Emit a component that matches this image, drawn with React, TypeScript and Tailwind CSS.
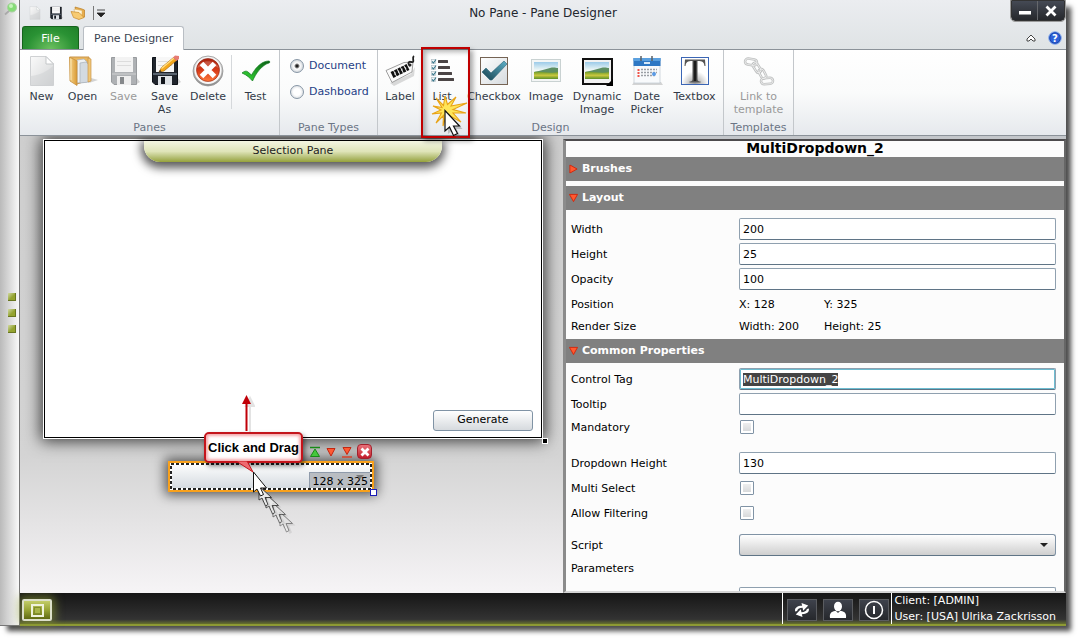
import React, { useEffect, useRef } from 'react';

interface ToolButtonProps {
  label: string;
  width: string;
  disabled?: boolean;
  icon: React.ReactNode;
  children?: React.ReactNode;
}

function ToolButton({ label, width, disabled, icon, children }: ToolButtonProps) {
  return (
    <div className={`relative shrink-0 ${width}`}>
      <button
        type="button"
        disabled={disabled}
        className={`flex w-full flex-col items-center gap-[3px] ${disabled ? 'text-[#9a9a9a]' : 'text-[#333b48]'}`}
      >
        {icon}
        <span className="text-center leading-[13px]">{label}</span>
      </button>
      {children}
    </div>
  );
}

function RibbonGroup({ title, children }: { title: string; children: React.ReactNode }) {
  return (
    <section className="flex shrink-0 flex-col justify-between border-r border-[#c3c7cb] pt-[5px]">
      <div className="flex">{children}</div>
      <h2 className="text-center leading-[14px] text-[#6b7585]">{title}</h2>
    </section>
  );
}

/* ---------- icons ---------- */

function PageIcon({ className }: { className: string }) {
  return (
    <svg viewBox="0 0 32 32" className={className}>
      <defs>
        <linearGradient id="page" x1="0" y1="0" x2="1" y2="1">
          <stop offset="0" stopColor="#fafafa" />
          <stop offset="1" stopColor="#d3d5d6" />
        </linearGradient>
      </defs>
      <path d="M4.500 1.500H20L27.500 9V30.500H4.500Z" fill="url(#page)" stroke="#cfd1d3" />
      <path d="M20 1.500V9H27.500Z" fill="#fff" stroke="#c4c7c9" />
      <path d="M5 21C14 20 22 16 27 11V30H5Z" fill="#c9cbcd" opacity=".4" />
    </svg>
  );
}

function OpenIcon() {
  return (
    <svg viewBox="0 0 32 32" className="h-8 w-8">
      <defs>
        <linearGradient id="folder" x1="0" x2="1">
          <stop offset="0" stopColor="#f7d58c" />
          <stop offset="1" stopColor="#d99a35" />
        </linearGradient>
      </defs>
      <path d="M22 28L31 25L24 23Z" fill="#aaa" opacity=".5" />
      <path d="M3 2H22V25L10 29Z" fill="#e9b65e" stroke="#c9954a" />
      <path d="M10 5L17 4L20 7V27L10 28Z" fill="#eef1f4" stroke="#a7b0ba" strokeWidth=".7" />
      <path d="M13 8L19 7L22 10V27L13 28Z" fill="#d3dae1" stroke="#a7b0ba" strokeWidth=".7" />
      <path d="M21 3L24 4V26L21 27Z" fill="#f0c778" stroke="#c9954a" strokeWidth=".7" />
      <path d="M2.500 2L10 6V30.500L3 26Z" fill="url(#folder)" stroke="#c7913e" strokeWidth=".8" />
      <path d="M4 4V25" stroke="#fff0c6" opacity=".8" />
    </svg>
  );
}

function DiskIcon({ className, faded, pencil }: { className: string; faded?: boolean; pencil?: boolean }) {
  const body = faded ? '#aeb1b4' : '#20252d';
  const edge = faded ? '#989b9e' : '#0d1117';
  return (
    <svg viewBox="0 0 32 32" className={className}>
      <path d="M27 30L32 27L28 22Z" fill="#888" opacity=".35" />
      <path d="M3.500 2.500H28.500V29.500H6L3.500 27Z" fill={body} stroke={edge} />
      <rect x="7" y="2" width="18" height="15" fill={faded ? '#f3f3f3' : '#f7f7f7'} />
      <path d="M9 6.500H23M9 10.500H23" stroke="#dcdcdc" />
      <path d="M4 18H28V20H4Z" fill={faded ? '#bfc1c3' : '#5a6470'} />
      <rect x="9" y="21" width="14" height="9" fill={faded ? '#eeeeee' : '#dfe3e7'} />
      <rect x="12" y="22" width="4" height="7" fill={faded ? '#85888b' : '#11151b'} />
      {pencil && (
        <g>
          <path d="M10 17L12.500 12.500L24.500 2.500L27.500 5.500L15 16Z" fill="#f5a81c" stroke="#a9690c" strokeWidth=".7" />
          <path d="M12.500 13.500L25 3" stroke="#ffe18a" strokeWidth="1.200" />
          <path d="M24 2.500L26 .5L30 1V4L27.500 6Z" fill="#e57b74" />
          <path d="M10 17L11 15L12.500 16.500Z" fill="#222" />
        </g>
      )}
    </svg>
  );
}

function DeleteIcon() {
  return (
    <svg viewBox="0 0 32 32" className="h-8 w-8">
      <defs>
        <linearGradient id="del" x1="0" y1="0" x2="0" y2="1">
          <stop offset="0" stopColor="#a8230f" />
          <stop offset=".5" stopColor="#d63a18" />
          <stop offset="1" stopColor="#ff7a3c" />
        </linearGradient>
        <linearGradient id="ring" x1="0" y1="0" x2="0" y2="1">
          <stop offset="0" stopColor="#e6e6e6" />
          <stop offset="1" stopColor="#8d8d8d" />
        </linearGradient>
      </defs>
      <circle cx="16" cy="16" r="15" fill="url(#ring)" stroke="#8b8b8b" strokeWidth=".7" />
      <circle cx="16" cy="15.500" r="13.500" fill="#f8f8f8" />
      <circle cx="16" cy="15" r="11.500" fill="url(#del)" stroke="#8c2011" strokeWidth=".6" />
      <path d="M9.500 8.500L22.500 21.500M22.500 8.500L9.500 21.500" stroke="#fff" strokeWidth="5" />
      <path d="M5 13C8 4 24 4 27 13C20 10 12 10 5 13Z" fill="#fff" opacity=".2" />
    </svg>
  );
}

function TestIcon() {
  return (
    <svg viewBox="0 0 32 32" className="h-8 w-8">
      <defs>
        <linearGradient id="tick" x1="1" y1="0" x2="0" y2="1">
          <stop offset="0" stopColor="#0b5c16" />
          <stop offset=".5" stopColor="#1f9d24" />
          <stop offset="1" stopColor="#3be23b" />
        </linearGradient>
      </defs>
      <path d="M2 18C5 15.500 7 16 8 17L11.500 20C16 12 22 6 29 6C30 6 30 8 29 8C22 10 16 18 12.500 26C10 23 7 20 2 18Z" fill="url(#tick)" stroke="#0f7a1c" strokeWidth=".7" />
    </svg>
  );
}

function LabelIcon() {
  return (
    <svg viewBox="0 0 32 32" className="h-8 w-8">
      <path d="M6 28L27 19L31 12L30 21L10 31Z" fill="#999" opacity=".35" />
      <path d="M2 15.500L20 7.500L29 7L28 17L8 27.500Z" fill="#fafafa" stroke="#888" strokeWidth=".8" />
      <path d="M8 20L24 12" stroke="#111" strokeWidth="6.500" strokeDasharray="3 .8" />
      <path d="M11 17V20M14.500 15.500L15 18M18 13.500V16M21 12L22 14" stroke="#fff" strokeWidth=".8" />
      <path d="M26 11C23 8 25 6 27 7C32 8 27 3 30 1" fill="none" stroke="#222" strokeWidth="1.800" />
      <circle cx="26" cy="10" r="1.500" fill="#222" />
    </svg>
  );
}

function ListIcon() {
  return (
    <svg viewBox="0 0 32 32" className="h-8 w-8">
      {[10, 12, 14, 16].map((width, i) => {
        const y = 5 + i * 6;
        return (
          <g key={y}>
            <rect x="5.500" y={y - 0.5} width="4" height="4" fill="#eef3f5" stroke="#b5c1c6" strokeWidth=".7" />
            <path d={`M6 ${y + 1.5}L7.500 ${y + 3}L10 ${y - 0.5}`} fill="none" stroke="#39788c" strokeWidth="1.100" />
            <rect x="12" y={y} width={width} height="3" rx=".5" fill="#4b4546" />
          </g>
        );
      })}
    </svg>
  );
}

function CheckboxIcon() {
  return (
    <svg viewBox="0 0 32 32" className="h-8 w-8">
      <defs>
        <linearGradient id="cbx" x1="0" y1="0" x2="1" y2="1">
          <stop offset="0" stopColor="#fff" />
          <stop offset="1" stopColor="#d5dade" />
        </linearGradient>
        <linearGradient id="cbt" x1="1" y1="0" x2="0" y2="1">
          <stop offset="0" stopColor="#5fb0c8" />
          <stop offset="1" stopColor="#16414f" />
        </linearGradient>
      </defs>
      <rect x="2.500" y="2.500" width="27" height="27" fill="url(#cbx)" stroke="#756354" />
      <path d="M4 17L8 13L13 18L26 6L29 9L14 25H12Z" fill="url(#cbt)" stroke="#2b6577" strokeWidth=".6" />
    </svg>
  );
}

function PictureIcon({ dynamic }: { dynamic?: boolean }) {
  return (
    <svg viewBox="0 0 32 32" className="h-8 w-8">
      <defs>
        <linearGradient id="sky" x1="0" y1="0" x2="0" y2="1">
          <stop offset="0" stopColor="#9ccbe9" />
          <stop offset=".5" stopColor="#f3f9f5" />
        </linearGradient>
        <linearGradient id="field" x1="0" y1="0" x2="0" y2="1">
          <stop offset="0" stopColor="#6d9a2c" />
          <stop offset=".5" stopColor="#c9c83e" />
          <stop offset="1" stopColor="#5c8f27" />
        </linearGradient>
      </defs>
      {dynamic ? (
        <rect x="2" y="4" width="29" height="25" fill="#f2f2f2" stroke="#111" strokeWidth="2" />
      ) : (
        <rect x="1.500" y="4.500" width="29" height="22" fill="#f4f6f6" stroke="#c9d2d2" />
      )}
      <rect x="4" y="7" width="24" height="17" fill="url(#sky)" />
      <path d="M4 17C11 16 15 14 20 13C24 12 26 13 28 13V24H4Z" fill="#5e8f62" />
      <path d="M4 17C12 16 20 19 28 17V24H4Z" fill="url(#field)" />
      {dynamic && <path d="M32 24V31H25Z" fill="#000" />}
    </svg>
  );
}

function DateIcon() {
  return (
    <svg viewBox="0 0 32 32" className="h-8 w-8">
      <path d="M3 27H30L32 30H1Z" fill="#999" opacity=".4" />
      <rect x="3" y="4" width="26" height="24" fill="#f8fafc" stroke="#c0c8d0" strokeWidth=".7" />
      <rect x="2.500" y="3" width="27" height="8" fill="#2e78c4" />
      <rect x="2.500" y="3" width="27" height="3" fill="#5aa0df" />
      <rect x="13" y="7" width="6" height="2" fill="#d6e8f7" />
      <path d="M10 1V6M21 1V6" stroke="#5a5f66" strokeWidth="1.500" />
      <path d="M10 14.500H26M10 17.500H26M10 20.500H24" stroke="#9a9fa5" strokeWidth="1.500" strokeDasharray="2 1" />
      <path d="M7.500 14V22" stroke="#f0544a" strokeWidth="2" strokeDasharray="2 1" />
      <circle cx="23" cy="19" r="2" fill="#5b9be6" />
    </svg>
  );
}

function TextboxIcon() {
  return (
    <svg viewBox="0 0 32 32" className="h-8 w-8">
      <defs>
        <radialGradient id="tshade" cx=".5" cy="1" r=".5">
          <stop offset="0" stopColor="#999" />
          <stop offset="1" stopColor="#fff" />
        </radialGradient>
      </defs>
      <rect x="2.500" y="2.500" width="27" height="27" fill="url(#tshade)" stroke="#3b66b5" />
      {/* serif T */}
      <path d="M6 4.500H26L26.500 11H25.500C25 7 23.500 6 18.500 6V24C18.500 26 19.500 26.500 21.500 26.500V27.500H10.500V26.500C12.500 26.500 13.500 26 13.500 24V6C8.500 6 7 7 6.500 11H5.500Z" fill="#555" />
      <path d="M16 6V26" stroke="#1c1c1c" strokeWidth="2.500" />
    </svg>
  );
}

function LinkIcon() {
  return (
    <svg viewBox="0 0 32 32" className="h-8 w-8">
      <g fill="none" stroke="#bfc1c1" strokeWidth="2.500">
        <rect x="2" y="4" width="12" height="6" rx="3" transform="rotate(8 8 7)" />
        <rect x="9" y="10" width="11" height="5" rx="2.500" transform="rotate(58 14 12)" />
        <rect x="14" y="16" width="10" height="5" rx="2.500" transform="rotate(62 19 19)" />
        <rect x="18" y="23" width="12" height="6" rx="3" transform="rotate(-4 24 26)" />
      </g>
      <g fill="none" stroke="#f1f1f1" strokeWidth=".8">
        <rect x="2" y="4" width="12" height="6" rx="3" transform="rotate(8 8 7)" />
        <rect x="9" y="10" width="11" height="5" rx="2.500" transform="rotate(58 14 12)" />
        <rect x="14" y="16" width="10" height="5" rx="2.500" transform="rotate(62 19 19)" />
        <rect x="18" y="23" width="12" height="6" rx="3" transform="rotate(-4 24 26)" />
      </g>
    </svg>
  );
}

function SmallFolderIcon() {
  return (
    <svg viewBox="0 0 16 14" className="h-3.5 w-4">
      <path d="M5 1L12 3L14.500 4V11L8 13Z" fill="#e8ad4c" stroke="#b97c22" strokeWidth=".7" />
      <path d="M4 3L12 4.500V9H5Z" fill="#fff5d8" stroke="#d5a95a" strokeWidth=".5" />
      <path d="M1 5.500L9 6.500L14 11.500L9 13.500L3.500 11.500Z" fill="#f7cb72" stroke="#c98b2d" strokeWidth=".7" />
    </svg>
  );
}

function ClickBurst() {
  return (
    <svg viewBox="0 0 42 46" className="pointer-events-none absolute top-10 left-[9px] z-30 h-[46px] w-[42px]">
      <path
        d="M5 3L12.500 10.500L14 1L16.500 9.500L25 2L20 11L36 8L22 14.500L35 18L22 18L30 27L18.500 20.500L20 32L15 21L12 31L12.500 20.500L5 28L10.500 18L1 19L10 15L2 11L11 12.500Z"
        fill="#ffe558"
        stroke="#e8a317"
        strokeWidth="1.100"
      />
      <path d="M14 16V37L18.500 33L22.500 42L26.500 40L22.500 32H28.500Z" fill="#555" opacity=".3" transform="translate(3 2)" />
      <path d="M14 15.500V36L18.500 32L22.500 40.500L26.500 38.500L22.500 31H28.500Z" fill="#fff" stroke="#111" strokeWidth="1.200" />
    </svg>
  );
}

/* ---------- title bar and ribbon ---------- */

function TitleBar() {
  return (
    <div className="grid h-[26px] grid-cols-[1fr_auto_1fr]">
      <div className="flex items-center gap-[7px] pl-2">
        <button type="button" aria-label="New"><PageIcon className="h-3.5 w-3.5" /></button>
        <button type="button" aria-label="Save"><DiskIcon className="h-3.5 w-3.5" /></button>
        <button type="button" aria-label="Open"><SmallFolderIcon /></button>
        <span className="h-3.5 border-l border-[#777]" />
        <button type="button" aria-label="Customize toolbar" className="-ml-1">
          <svg viewBox="0 0 8 8" className="h-2 w-2"><path d="M0 1H8M0 4H8L4 8Z" fill="#222" stroke="#222" strokeWidth=".8" /></svg>
        </button>
      </div>
      <h1 className="self-center text-xs text-[#23272e]">No Pane - Pane Designer</h1>
      <div className="flex items-start justify-end pr-px">
        <div className="flex h-[21px] overflow-hidden rounded-b border border-[#333] bg-linear-to-b from-[#454a55] to-[#26282c] outline outline-[#9b9b9b]">
          <button type="button" aria-label="Minimize" className="flex w-[26px] items-center justify-center border-r border-[#66686c] pt-1">
            <svg viewBox="0 0 12 4" className="h-1 w-3"><rect width="12" height="3.500" fill="#fff" /></svg>
          </button>
          <button type="button" aria-label="Close" className="flex w-[26px] items-center justify-center">
            <svg viewBox="0 0 12 12" className="h-3 w-3"><path d="M1.500 1.500L10.500 10.500M10.500 1.500L1.500 10.500" stroke="#fff" strokeWidth="2.800" /></svg>
          </button>
        </div>
      </div>
    </div>
  );
}

function TabRow() {
  return (
    <div className="flex h-6 items-end border-b border-[#8b9299] pl-0.5">
      <button
        type="button"
        className="h-[23px] w-[57px] rounded-t-[3px] border border-b-0 border-[#15641c] bg-[radial-gradient(ellipse_at_bottom,#6cc05f,#2a9234_60%,#1f8029)] pt-0.5 text-white"
      >
        File
      </button>
      <button
        type="button"
        className="relative top-px ml-1 h-6 rounded-t-[3px] border border-b-0 border-[#b9bec4] bg-white px-2.5 pt-0.5 text-[#3b4452]"
      >
        Pane Designer
      </button>
      <div className="ml-auto flex items-center gap-3 self-center pr-1">
        <button type="button" aria-label="Collapse ribbon">
          <svg viewBox="0 0 10 8" className="h-2 w-2.5">
            <path d="M1 5L5 1L9 5V7H7L5 5L3 7H1Z" fill="#fff" stroke="#444" />
          </svg>
        </button>
        <button type="button" aria-label="Help">
          <svg viewBox="0 0 14 14" className="h-3.5 w-3.5">
            <circle cx="7" cy="7" r="6.300" fill="#2e62d9" stroke="#8fb0ea" />
            <circle cx="7" cy="7" r="5.200" fill="none" stroke="#1941a5" strokeWidth=".8" />
            <text x="7" y="10.500" textAnchor="middle" fontSize="10" fontWeight="bold" fill="#fff">?</text>
          </svg>
        </button>
      </div>
    </div>
  );
}

function PaneTypeRadio({ label, checked }: { label: string; checked?: boolean }) {
  return (
    <label className="flex h-[26px] items-center gap-[5px] text-[#1f3f86]">
      <input
        type="radio"
        name="pane-type"
        defaultChecked={checked}
        className="h-3.5 w-3.5 appearance-none rounded-full border border-[#8796a5] bg-[radial-gradient(circle,#fff_40%,#c6ccd2)] checked:bg-[radial-gradient(circle,#222_1px,#fff_3px,#c6ccd2_7px)]"
      />
      {label}
    </label>
  );
}

function Ribbon() {
  return (
    <div className="flex h-[86px] border-b border-[#8b9299] bg-linear-to-b from-white via-[#fafbfb] to-[#e6e9ed]">
      <RibbonGroup title="Panes">
        <div className="flex pl-px">
          <ToolButton label="New" width="w-[41px]" icon={<PageIcon className="h-8 w-8" />} />
          <ToolButton label="Open" width="w-[41px]" icon={<OpenIcon />} />
          <ToolButton label="Save" width="w-[41px]" disabled icon={<DiskIcon className="h-8 w-8" faded />} />
          <ToolButton label="Save As" width="w-[41px]" icon={<DiskIcon className="h-8 w-8" pencil />} />
          <ToolButton label="Delete" width="w-[46px]" icon={<DeleteIcon />} />
          <span className="h-[54px] border-l border-[#d5d8db]" />
          <ToolButton label="Test" width="w-[47px]" icon={<TestIcon />} />
        </div>
      </RibbonGroup>
      <RibbonGroup title="Pane Types">
        <div className="-mt-0.5 w-[97px] pl-2.5">
          <PaneTypeRadio label="Document" checked />
          <PaneTypeRadio label="Dashboard" />
        </div>
      </RibbonGroup>
      <RibbonGroup title="Design">
        <ToolButton label="Label" width="w-11" icon={<LabelIcon />} />
        <ToolButton label="List" width="w-10" icon={<ListIcon />}>
          <div className="pointer-events-none absolute -top-2 -left-px z-20 h-[91px] w-[49px] border-2 border-[#c00000] shadow-[3px_3px_5px_rgba(0,0,0,0.35),inset_3px_3px_5px_rgba(0,0,0,0.3)]" />
          <ClickBurst />
        </ToolButton>
        <ToolButton label="Checkbox" width="w-16" icon={<CheckboxIcon />} />
        <ToolButton label="Image" width="w-10" icon={<PictureIcon />} />
        <ToolButton label="Dynamic Image" width="w-[62px]" icon={<PictureIcon dynamic />} />
        <ToolButton label="Date Picker" width="w-[38px]" icon={<DateIcon />} />
        <ToolButton label="Textbox" width="w-[57px]" icon={<TextboxIcon />} />
      </RibbonGroup>
      <RibbonGroup title="Templates">
        <ToolButton label="Link to template" width="w-[69px]" disabled icon={<LinkIcon />} />
      </RibbonGroup>
    </div>
  );
}

/* ---------- design canvas ---------- */

function CursorTrail() {
  const ghosts = [
    { x: 26, y: 34, opacity: 0.5 },
    { x: 19, y: 25, opacity: 0.65 },
    { x: 12, y: 16, opacity: 0.8 },
    { x: 5, y: 8, opacity: 0.9 },
  ];
  return (
    <svg viewBox="0 0 54 72" className="pointer-events-none absolute top-[334px] left-[231px] h-[72px] w-[54px]">
      {ghosts.map((ghost) => (
        <g key={ghost.x} transform={`translate(${ghost.x} ${ghost.y})`}>
          <path d="M3 8V22L6 20L9.500 28L12 26.500L9 19.500H15.500Z" transform="translate(3 2)" fill="#555" opacity=".12" />
          <path d="M3 8V22L6 20L9.500 28L12 26.500L9 19.500H15.500Z" fill="#f2f2f2" stroke="#333" opacity={ghost.opacity} />
        </g>
      ))}
      <path d="M2.500 2V22L6 19L9.500 26L12.500 24.500L9.500 18H15.500Z" fill="#fff" stroke="#111" />
    </svg>
  );
}

function Callout() {
  return (
    <div className="absolute top-[296px] left-[184px] z-10 flex h-[31px] items-center rounded-[5px] border-2 border-[#c4141b] bg-white px-0.5 font-['Liberation_Sans',sans-serif] text-[13px] font-bold whitespace-nowrap text-black shadow-[2px_3px_5px_rgba(0,0,0,0.5),inset_0_0_3px_2px_#f5a9ac]">
      Click and Drag
      <svg viewBox="0 0 20 12" className="absolute top-[27px] left-[29px] h-3 w-5">
        <path d="M1 0H12L18 11Z" fill="#ee6a70" stroke="#c4141b" />
      </svg>
    </div>
  );
}

function SelectedDropdown() {
  return (
    <div className="absolute top-[325px] left-[148px] h-[31px] w-[206px] border-2 border-[#f9a11b] shadow-[0_0_12px_3px_rgba(0,0,0,0.6)]">
      <div className="absolute -top-[19px] right-0 flex items-center gap-1">
        <svg viewBox="0 0 12 12" className="h-3 w-3"><path d="M1 1.500H11" stroke="#188a18" strokeWidth="1.500" /><path d="M6 3L10.500 10.500H1.500Z" fill="#46c83c" stroke="#188a18" /></svg>
        <svg viewBox="0 0 12 12" className="h-3 w-3"><path d="M6 10L10 2.500H2Z" fill="#ff5a33" stroke="#c22712" /></svg>
        <svg viewBox="0 0 12 12" className="h-3 w-3"><path d="M6 8.500L10 1.500H2Z" fill="#ff5a33" stroke="#c22712" /><path d="M1 11H11" stroke="#d8432b" strokeWidth="1.500" /></svg>
        <button type="button" aria-label="Remove" className="flex h-[15px] w-[15px] items-center justify-center rounded-sm border border-[#a3202b] bg-linear-to-b from-[#e8707a] to-[#c2182b]">
          <svg viewBox="0 0 10 10" className="h-2.5 w-2.5"><path d="M1.500 1.500L8.500 8.500M8.500 1.500L1.500 8.500" stroke="#fff" strokeWidth="2.800" /></svg>
        </button>
      </div>
      <div className="relative h-full overflow-hidden bg-linear-to-b from-white to-[#d2d8de]">
        <svg viewBox="0 0 8 4" className="absolute top-3 right-2 z-10 h-1 w-2"><path d="M0 0H8L4 4Z" fill="#777" /></svg>
        <div className="absolute right-0 bottom-0 border border-[#8f9bab] bg-[#b9bdc2] px-[3px] pt-0.5 leading-[14px] text-black">128 x 325</div>
        <svg className="absolute inset-0 h-full w-full">
          <rect x="1" y="1" width="200" height="25" fill="none" stroke="#fff" strokeWidth="2" />
          <rect x="1" y="1" width="200" height="25" fill="none" stroke="#222" strokeWidth="2" strokeDasharray="3 2" />
        </svg>
      </div>
      <span className="absolute -right-[5px] -bottom-[6px] h-[7px] w-[7px] border border-[#1b1bb5] bg-white" />
    </div>
  );
}

function DesignCanvas() {
  return (
    <main className="relative z-10 min-w-0 flex-1 bg-linear-to-b from-[#cfcfcf] via-[#d4d4d4] via-70% to-[#f6f4f6] pt-1 pr-[21px] pl-6">
      <div className="relative flex h-[298px] flex-col items-center justify-between border border-black bg-white shadow-[0_0_0_1px_#fff,0_0_15px_3px_rgba(0,0,0,0.75)]">
        <h2 className="h-[21px] w-3/5 rounded-b-[16px] bg-linear-to-b from-[#f3f5e2] via-[#dfe4b8] to-[#96a239] text-center leading-5 text-[#222] shadow-[0_3px_10px_3px_rgba(0,0,0,0.65)]">
          Selection Pane
        </h2>
        <button type="button" className="mr-2 mb-1.5 h-[21px] w-[100px] self-end rounded-[3px] border border-[#8093a5] bg-linear-to-b from-white to-[#d6dade] text-black">
          Generate
        </button>
        <span className="absolute -right-[7px] -bottom-[7px] h-1.5 w-1.5 border border-white bg-black" />
      </div>
      <svg viewBox="0 0 16 40" className="pointer-events-none absolute top-[258px] left-[219px] h-10 w-4">
        <path d="M11 12V38M7 12H15L11 4Z" fill="#777" stroke="#777" strokeWidth="2" opacity=".2" />
        <path d="M7.500 8V37" stroke="#c00008" strokeWidth="2" />
        <path d="M3 10H12L7.500 1Z" fill="#c00008" />
      </svg>
      <SelectedDropdown />
      <Callout />
      <CursorTrail />
    </main>
  );
}

/* ---------- properties ---------- */

const fieldClass =
  'h-[22px] w-full min-w-0 rounded-[2px] border border-[#8fa0af] border-b-[#5f7486] bg-white px-[3px] text-black outline-none';

function SectionHeader({ title, closed }: { title: string; closed?: boolean }) {
  return (
    <button type="button" className="flex h-6 w-full items-center gap-1 bg-[#808080] pl-[3px] font-bold text-white">
      <svg viewBox="0 0 10 10" className={`h-2.5 w-[9px] ${closed ? '-rotate-90' : ''}`}>
        <path d="M.5 1H9.500L5 9Z" fill="#ff5a30" stroke="#d42208" />
      </svg>
      {title}
    </button>
  );
}

function Row({ label, htmlFor, className = '', children }: { label: string; htmlFor?: string; className?: string; children?: React.ReactNode }) {
  return (
    <div className={`grid h-[22px] grid-cols-[168px_1fr] items-center pr-2 pl-[5px] ${className}`}>
      {htmlFor ? <label htmlFor={htmlFor} className="pt-0.5">{label}</label> : <span className="pt-0.5">{label}</span>}
      {children}
    </div>
  );
}

function TextRow({ id, label, value, className }: { id: string; label: string; value: string; className?: string }) {
  return (
    <Row label={label} htmlFor={id} className={className}>
      <input id={id} type="text" defaultValue={value} className={fieldClass} />
    </Row>
  );
}

function CheckRow({ id, label, className }: { id: string; label: string; className?: string }) {
  return (
    <Row label={label} htmlFor={id} className={className}>
      <input
        id={id}
        type="checkbox"
        className="ml-px h-3.5 w-3.5 appearance-none rounded-[1px] border border-[#8093a5] bg-linear-to-b from-[#f4f4f4] to-[#d2d4d6] shadow-[inset_0_0_0_2px_#fff]"
      />
    </Row>
  );
}

function PropertiesPanel() {
  const tagRef = useRef<HTMLInputElement>(null);

  useEffect(() => {
    tagRef.current?.focus();
    tagRef.current?.select();
  }, []);

  return (
    <aside className="relative z-10 mt-[3px] flex w-[calc(48%+1px)] flex-col overflow-hidden border-t-2 border-r-2 border-b-2 border-l-[3px] border-t-[#4d4b4d] border-r-[#666] border-b-[#d5d5d5] border-l-[#8b8b8b] bg-[#fcfcfc] text-black">
      <h2 className="h-4 shrink-0 text-center text-sm leading-[15px] font-bold">MultiDropdown_2</h2>
      <div className="mb-[5px] shrink-0">
        <SectionHeader title="Brushes" closed />
      </div>
      <div className="shrink-0">
        <SectionHeader title="Layout" />
        <div className="pt-2 pb-0.5">
          <TextRow id="width" label="Width" value="200" />
          <TextRow id="height" label="Height" value="25" className="mt-[3px]" />
          <TextRow id="opacity" label="Opacity" value="100" className="mt-[3px]" />
          <Row label="Position" className="mt-[3px]">
            <div className="grid grid-cols-[85px_1fr] pt-0.5"><span>X: 128</span><span>Y: 325</span></div>
          </Row>
          <Row label="Render Size">
            <div className="grid grid-cols-[85px_1fr] pt-0.5"><span>Width: 200</span><span>Height: 25</span></div>
          </Row>
        </div>
      </div>
      <div className="min-h-0">
        <SectionHeader title="Common Properties" />
        <div className="pt-[5px]">
          <Row label="Control Tag" htmlFor="tag">
            <input
              id="tag"
              ref={tagRef}
              type="text"
              defaultValue="MultiDropdown_2"
              className={`${fieldClass} shadow-[inset_0_0_0_1px_#6dbdd1] selection:bg-[#444] selection:text-white`}
            />
          </Row>
          <TextRow id="tooltip" label="Tooltip" value="" className="mt-[3px]" />
          <CheckRow id="mandatory" label="Mandatory" className="mt-px" />
          <TextRow id="dropdown-height" label="Dropdown Height" value="130" className="mt-3.5" />
          <CheckRow id="multi" label="Multi Select" className="mt-[3px]" />
          <CheckRow id="filtering" label="Allow Filtering" className="mt-[3px]" />
          <Row label="Script" htmlFor="script" className="mt-2.5">
            <div className="relative">
              <select id="script" className="block h-[22px] w-full appearance-none rounded-[3px] border border-[#8093a5] border-b-[#5f7486] bg-linear-to-b from-white to-[#cfcfcf]" />
              <svg viewBox="0 0 8 4" className="pointer-events-none absolute top-[9px] right-2 h-1 w-2"><path d="M0 0H8L4 4Z" fill="#222" /></svg>
            </div>
          </Row>
          <Row label="Parameters" className="mt-px" />
          <div className="mt-2 pr-2 pl-[173px]">
            <input type="text" aria-label="Parameters" className={fieldClass} />
          </div>
        </div>
      </div>
    </aside>
  );
}

/* ---------- side rail and status bar ---------- */

function SideRail() {
  return (
    <nav className="grid w-5 shrink-0 grid-rows-[1fr_auto_1fr] border-r border-b border-[#777] bg-linear-to-r from-[#bababa] to-[#fafafa]">
      <svg viewBox="0 0 14 14" className="mt-0.5 ml-1 h-3.5 w-3.5">
        <path d="M1 12.500L6 8" stroke="#aaa" strokeWidth="1.800" />
        <circle cx="8" cy="5.500" r="4.500" fill="#86dd76" stroke="#a9cfa0" />
        <circle cx="7" cy="4" r="2" fill="#c5f5b9" />
      </svg>
      <div className="flex flex-col items-center gap-2 pl-1">
        {['First', 'Second', 'Third'].map((name) => (
          <button key={name} type="button" aria-label={name} className="h-2 w-2 border-r border-b border-[#69761f] bg-linear-to-br from-[#d3dba0] to-[#94a32f] to-60%" />
        ))}
      </div>
    </nav>
  );
}

const statusButton =
  'flex h-[22px] w-[30px] items-center justify-center border border-[#5a5c60] bg-linear-to-b from-[#3e424c] to-[#26282c]';

function StatusBar() {
  return (
    <footer className="flex h-[33px] shrink-0 items-stretch border-b-2 border-[#8d9a34] bg-linear-to-b from-[#161616] via-[#333] via-85% to-[#68712b]">
      <button
        type="button"
        aria-label="Panes"
        className="mt-1.5 ml-0.5 flex h-[22px] w-[30px] items-center justify-center rounded-[2px] border-2 border-[#dcdfc9] bg-linear-to-b from-[#c3cd68] via-[#98a434] to-[#5f6a12] shadow-[0_0_10px_3px_rgba(140,155,50,0.6)]"
      >
        <span className="flex h-[13px] w-[13px] items-center justify-center border-2 border-[#eff2dc]">
          <span className="h-[7px] w-[7px] border border-[#818e2c] bg-[#a9b64a]" />
        </span>
      </button>
      <div className="ml-auto flex gap-1.5 border-x border-white pt-1.5 pr-0.5 pl-1">
        <button type="button" aria-label="Refresh" className={statusButton}>
          <svg viewBox="0 0 18 16" className="h-4 w-[18px]">
            <path d="M2 8C2 4 6 3 10 4V1L16 5L10 9V6C7 5.500 5 6 4 8Z" fill="#fff" transform="rotate(-12 9 8)" />
            <path d="M16 8C16 12 12 13 8 12V15L2 11L8 7V10C11 10.500 13 10 14 8Z" fill="#fff" transform="rotate(-12 9 8)" />
          </svg>
        </button>
        <button type="button" aria-label="User" className={statusButton}>
          <svg viewBox="0 0 18 18" className="h-[18px] w-[18px]">
            <path d="M1 17C0 11 4 10 7 10L9 12L11 10C14 10 18 11 17 17Z" fill="#fff" />
            <ellipse cx="9" cy="5.500" rx="4" ry="4.800" fill="#fff" />
          </svg>
        </button>
        <button type="button" aria-label="Log off" className={statusButton}>
          <svg viewBox="0 0 20 20" className="h-5 w-5 shrink-0">
            <circle cx="10" cy="10" r="8.500" fill="none" stroke="#fff" strokeWidth="1.500" />
            <path d="M10 6V14" stroke="#fff" strokeWidth="2" />
          </svg>
        </button>
      </div>
      <div className="pr-2.5 pl-[3px] leading-4 whitespace-nowrap text-white">
        <p>Client: [ADMIN]</p>
        <p>User: [USA] Ulrika Zackrisson</p>
      </div>
    </footer>
  );
}

export default function App() {
  return (
    <div className="h-screen overflow-hidden bg-white pr-[15px] pb-[15px] font-['DejaVu_Sans',Verdana,sans-serif] text-[11px]">
      <div className="flex h-full shadow-[6px_6px_5px_-1px_rgba(0,0,0,0.7)]">
        <SideRail />
        <div className="flex min-w-0 flex-1 flex-col">
          <header className="relative z-20 shrink-0 bg-linear-to-b from-[#ebedf0] to-[#dfe3e5] to-[50px]">
            <TitleBar />
            <TabRow />
            <Ribbon />
          </header>
          <div className="flex min-h-0 flex-1 bg-[#c3c6ca]">
            <DesignCanvas />
            <PropertiesPanel />
          </div>
          <StatusBar />
        </div>
      </div>
    </div>
  );
}
